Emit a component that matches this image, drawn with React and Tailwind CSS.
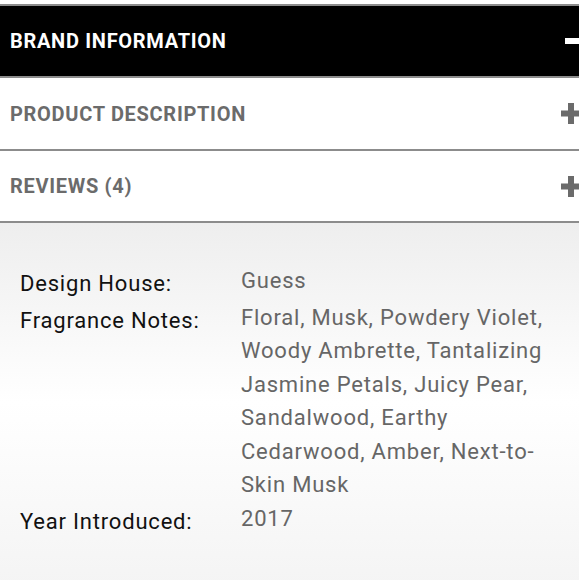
import React from 'react';

const details = [
    { label: 'Design House:', value: 'Guess' },
    {
        label: 'Fragrance Notes:',
        value: 'Floral, Musk, Powdery Violet, Woody Ambrette, Tantalizing Jasmine Petals, Juicy Pear, Sandalwood, Earthy Cedarwood, Amber, Next-to-Skin Musk',
    },
    { label: 'Year Introduced:', value: '2017' },
];

const Plus = () => (
    <svg width="20" height="21" viewBox="0 0 20 21" className="block">
        <rect x="7" y="0" width="6" height="21" fill="#6b6b6b" />
        <rect x="0" y="7.5" width="20" height="6" fill="#6b6b6b" />
    </svg>
);

const Minus = () => (
    <svg width="20" height="6" viewBox="0 0 20 6" className="block">
        <rect x="0" y="0" width="20" height="6" fill="#ffffff" />
    </svg>
);

const App = () => {
    return (
        <div className="w-[579px] h-[580px] overflow-hidden bg-white pt-[4px] font-['Roboto','Liberation_Sans',sans-serif]">
            <div className="border-t-2 border-[#8c8c8c] bg-black h-[72px] flex items-center justify-between pl-[10px]">
                <span className="text-white font-bold text-[20px] tracking-[0.7px]">BRAND INFORMATION</span>
                <span className="translate-x-[6px]"><Minus /></span>
            </div>
            <div className="border-t-2 border-[#8c8c8c] bg-white h-[73px] flex items-center justify-between pl-[10px]">
                <span className="text-[#6b6b6b] font-bold text-[20px] tracking-[0.7px]">PRODUCT DESCRIPTION</span>
                <span className="translate-x-[2px]"><Plus /></span>
            </div>
            <div className="border-t-2 border-[#8c8c8c] bg-white h-[72px] flex items-center justify-between pl-[10px]">
                <span className="text-[#6b6b6b] font-bold text-[20px] tracking-[0.7px]">REVIEWS (4)</span>
                <span className="translate-x-[2px]"><Plus /></span>
            </div>
            <div className="border-t-2 border-[#8c8c8c] h-[400px] bg-[linear-gradient(to_bottom,#eeeeee_0%,#ffffff_45%,#f2f2f2_100%)] pt-[41px] pl-[20px] pr-[20px]">
                <div className="grid grid-cols-[221px_1fr]">
                    {details.map(d => (
                        <React.Fragment key={d.label}>
                            <div className="text-[#111111] text-[22px] tracking-[0.8px] leading-[33.5px] pt-[3px]">{d.label}</div>
                            <div className="text-[#666666] text-[22px] tracking-[0.8px] leading-[33.5px]">{d.value}</div>
                        </React.Fragment>
                    ))}
                </div>
            </div>
        </div>
    );
};

export default App;
